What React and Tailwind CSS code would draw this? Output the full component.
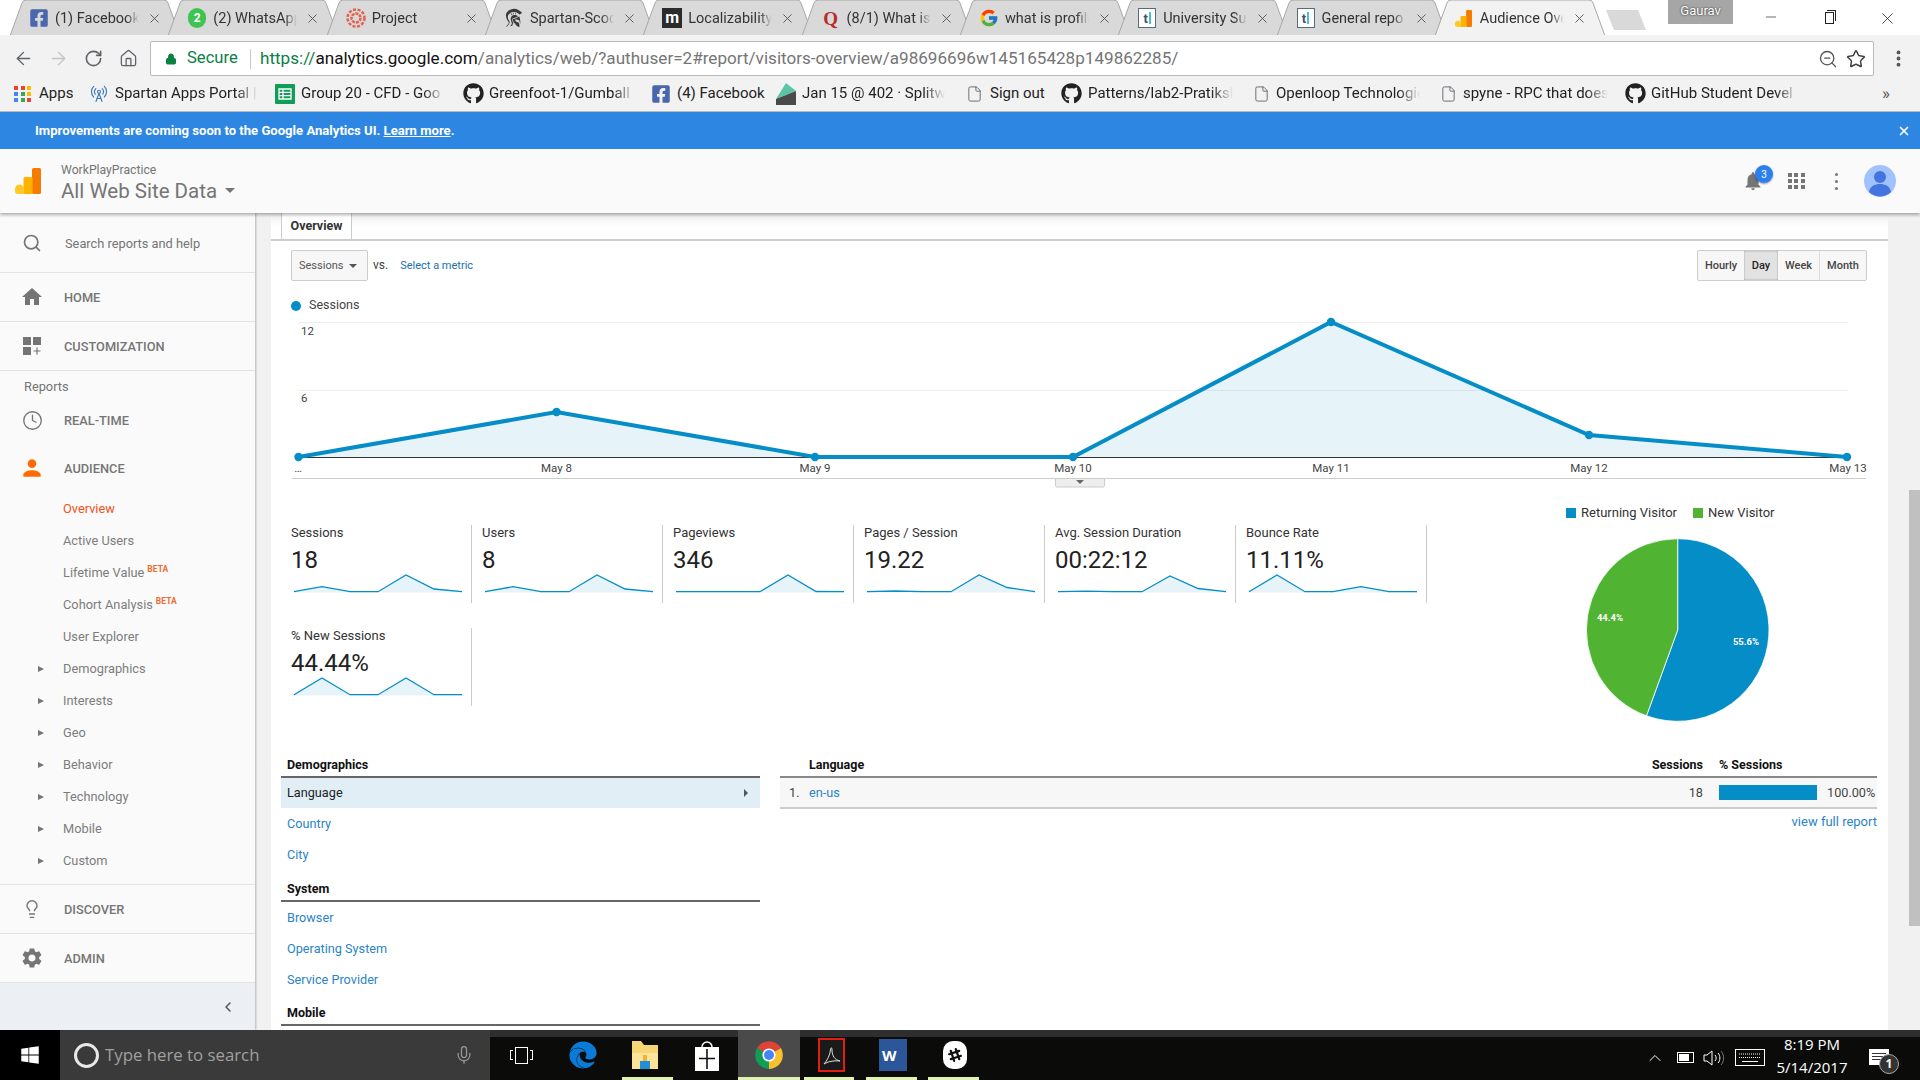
import React from 'react';
import { ArrowLeft, ArrowRight, RotateCw, Home, Star, ZoomOut, Lock, File, MoreVertical, Search, Clock, Lightbulb, ChevronLeft, ChevronUp, Mic, X, Minus, RadioTower } from 'lucide-react';
import { FaFacebookSquare, FaGithub, FaWindows, FaEdge, FaSlackHash } from 'react-icons/fa';
import { FcGoogle } from 'react-icons/fc';
import { GiSpartanHelmet } from 'react-icons/gi';
import { MdSettings, MdNotifications, MdHome, MdPerson } from 'react-icons/md';

const fade = 'overflow-hidden whitespace-nowrap [mask-image:linear-gradient(to_right,black_85%,transparent)]';

function AnalyticsLogo({ className }) {
  return (
    <svg viewBox="0 0 26 26" className={className}>
      <rect x="17" y="0" width="9" height="26" rx="1.5" fill="#f57c00" />
      <rect x="8.5" y="9" width="9" height="17" rx="1.5" fill="#ffb300" />
      <path d="M0 21a4.5 4.5 0 0 1 9 0v5H3a3 3 0 0 1-3-3z" fill="#ffca28" />
    </svg>
  );
}

function TlIcon() {
  return (
    <div className="w-[18px] h-[20px] border border-[#5a6b78] flex items-center justify-center gap-[1px] bg-white">
      <span className="text-[13px] leading-none text-[#42535f] font-bold">t</span>
      <span className="w-[2px] h-[12px] bg-[#4fc1c6]" />
    </div>
  );
}

const tabs = [
  { title: '(1) Facebook', icon: <FaFacebookSquare className="w-[20px] h-[20px] text-[#4a67ad]" /> },
  {
    title: '(2) WhatsApp',
    icon: (
      <div className="w-[18px] h-[20px] rounded-full bg-[#3fc351] flex items-center justify-center text-white text-[12px] font-bold">2</div>
    ),
  },
  {
    title: 'Project',
    icon: (
      <svg viewBox="0 0 20 20" className="w-[20px] h-[20px]">
        <circle cx="10" cy="10" r="4.5" fill="none" stroke="#e4604f" strokeWidth="2.5" strokeDasharray="3 1" />
        <circle cx="10" cy="10" r="8.5" fill="none" stroke="#e4604f" strokeWidth="2.5" strokeDasharray="3 1.6" />
      </svg>
    ),
  },
  { title: 'Spartan-Scoop', icon: <GiSpartanHelmet className="w-[20px] h-[20px] text-[#3a3a3a]" /> },
  {
    title: 'Localizability',
    icon: (
      <div className="w-[20px] h-[20px] bg-[#2b2b2b] flex items-center justify-center text-white text-[16px] leading-none font-bold">m</div>
    ),
  },
  {
    title: '(8/1) What is',
    icon: <span className="text-[#b92b27] text-[19px] leading-none font-bold font-['Liberation_Serif',serif]">Q</span>,
  },
  { title: 'what is profile', icon: <FcGoogle className="w-[20px] h-[20px]" /> },
  { title: 'University Sup', icon: <TlIcon /> },
  { title: 'General repo', icon: <TlIcon /> },
  { title: 'Audience Ove', icon: <AnalyticsLogo className="w-[17px] h-[17px]" />, active: true },
];

function Tab({ title, icon, active }) {
  return (
    <div className={`relative w-[170px] h-[36px] shrink-0 -mr-[11.7px] flex items-center ${active ? 'z-10' : ''}`}>
      <svg viewBox="0 0 170 36" className="absolute inset-0 w-[170px] h-[36px]">
        <path
          d="M0 36 L12 3 Q13 0 16 0 L154 0 Q157 0 158 3 L170 36 Z"
          fill={active ? '#f2f2f2' : '#d9d9d9'}
          stroke="#a8a8a8"
          strokeWidth="1"
        />
      </svg>
      <div className="relative w-[20px] ml-[19px] flex justify-center">{icon}</div>
      <div className={`relative ml-[6px] w-[84px] pt-[2px] text-[14.5px] text-[#333] ${active ? 'text-[#111]' : ''} ${fade}`}>{title}</div>
      <X className="relative ml-[8px] w-[15px] h-[15px] text-[#555]" strokeWidth={1.5} />
    </div>
  );
}

function DocIcon() {
  return <File className="w-[17px] h-[20px] text-[#5f6368]" strokeWidth={1.3} />;
}

const gh = <FaGithub className="w-[21px] h-[21px] text-[#222]" />;

const bookmarks = [
  {
    w: 72,
    pl: 14,
    title: 'Apps',
    gap: 7,
    plain: true,
    icon: (
      <div className="grid grid-cols-3 gap-[2px] w-[18px]">
        {['#ea4335', '#ea4335', '#fbbc05', '#4285f4', '#34a853', '#fbbc05', '#4285f4', '#34a853', '#ea4335'].map((c, i) => (
          <span key={i} className="w-[4px] h-[4px]" style={{ background: c }} />
        ))}
      </div>
    ),
  },
  { w: 186, pl: 18, title: 'Spartan Apps Portal | S', gap: 7, icon: <RadioTower className="w-[18px] h-[20px] text-[#3d78b8]" strokeWidth={1.5} /> },
  {
    w: 187,
    pl: 17,
    title: 'Group 20 - CFD - Goo',
    gap: 6,
    icon: (
      <svg viewBox="0 0 20 20" className="w-[20px] h-[20px]">
        <rect width="20" height="20" rx="1" fill="#0f9d58" />
        <path d="M4 5h12v10H4zM4 8.3h12M4 11.6h12M8 5v10" fill="none" stroke="#fff" strokeWidth="1.3" />
      </svg>
    ),
  },
  { w: 190, pl: 18, title: 'Greenfoot-1/Gumball', gap: 5, icon: gh },
  { w: 126, pl: 16, title: '(4) Facebook', gap: 6, plain: true, icon: <FaFacebookSquare className="w-[20px] h-[20px] text-[#4a67ad]" /> },
  {
    w: 184,
    pl: 15,
    title: 'Jan 15 @ 402 · Splitwi',
    gap: 6,
    icon: (
      <svg viewBox="0 0 20 22" className="w-[20px] h-[22px]">
        <path d="M10 0L20 8 0 16z" fill="#5bc5a7" />
        <path d="M0 16l20-8v14H0z" fill="#4a4a4a" />
      </svg>
    ),
  },
  { w: 100, pl: 21, title: 'Sign out', gap: 7, plain: true, icon: <DocIcon /> },
  { w: 188, pl: 16, title: 'Patterns/lab2-Pratiksh', gap: 6, icon: gh },
  { w: 187, pl: 20, title: 'Openloop Technologie', gap: 6, icon: <DocIcon /> },
  { w: 188, pl: 20, title: 'spyne - RPC that does', gap: 6, icon: <DocIcon /> },
  { w: 190, pl: 17, title: 'GitHub Student Devel', gap: 5, icon: gh },
];

function Chrome() {
  return (
    <div>
      <div className="h-[35px] flex bg-white pl-[10px]">
        {tabs.map((t) => (
          <Tab key={t.title} {...t} />
        ))}
        <div className="relative z-0 ml-[13px] mt-[9px] w-[40px] h-[21px]">
          <svg viewBox="0 0 40 21" className="w-[40px] h-[21px]">
            <path d="M0 1h32l8 20H8z" fill="#d9d9d9" />
          </svg>
        </div>
        <div className="ml-[22px] w-[65px] h-[24px] bg-[#a6a6a6] text-white text-[13px] text-center leading-[22px] [text-shadow:0_0_2px_#111]">Gaurav</div>
        <div className="ml-[9px] flex h-[35px] items-start pt-[9px] text-[#222]">
          <div className="w-[58px] flex justify-center"><Minus className="w-[16px] h-[16px]" strokeWidth={1} /></div>
          <div className="w-[58px] flex justify-center">
            <div className="relative w-[9px] h-[12px] border border-[#222] bg-white mt-[3px]">
              <div className="absolute -top-[3px] left-[1px] w-[9px] h-[11px] border-t border-r border-[#222]" />
            </div>
          </div>
          <div className="w-[58px] flex justify-center"><X className="w-[19px] h-[19px]" strokeWidth={1} /></div>
        </div>
      </div>
      <div className="relative z-20 h-[41px] bg-[#f2f2f2] flex pl-[6px] pt-[6px]">
        <div className="w-[35px] h-[34px] flex items-center justify-center"><ArrowLeft className="w-[21px] h-[21px] text-[#5f6368]" strokeWidth={1.6} /></div>
        <div className="w-[35px] h-[34px] flex items-center justify-center"><ArrowRight className="w-[21px] h-[21px] text-[#c4c4c4]" strokeWidth={1.6} /></div>
        <div className="w-[35px] h-[34px] flex items-center justify-center"><RotateCw className="w-[19px] h-[19px] text-[#5f6368]" strokeWidth={2} /></div>
        <div className="w-[35px] h-[34px] flex items-center justify-center"><Home className="w-[19px] h-[19px] text-[#5f6368]" strokeWidth={1.6} /></div>
        <div className="ml-[4px] w-[1724px] h-[35px] bg-white border border-[#b9b9b9] rounded-[2px] flex items-center pl-[14px]">
          <Lock className="w-[12px] h-[14px] text-[#0b8043] fill-[#0b8043]" strokeWidth={2} />
          <span className="ml-[10px] w-[63px] text-[#0b8043] text-[16.6px]">Secure</span>
          <span className="w-px h-[20px] bg-[#c8c8c8]" />
          <span className="ml-[9px] text-[17.1px] whitespace-nowrap text-[#757575]">
            <span className="text-[#0b8043]">https://</span>
            <span className="text-[#111]">analytics.google.com</span>
            /analytics/web/?authuser=2#report/visitors-overview/a98696696w145165428p149862285/
          </span>
          <div className="ml-auto flex items-center gap-[8px] pr-[7px]">
            <ZoomOut className="w-[20px] h-[20px] text-[#555]" strokeWidth={1.6} />
            <Star className="w-[20px] h-[20px] text-[#444]" strokeWidth={1.8} />
          </div>
        </div>
        <div className="ml-[14px] h-[34px] flex items-center"><MoreVertical className="w-[21px] h-[21px] text-[#555]" strokeWidth={2.4} /></div>
      </div>
      <div className="h-[36px] bg-[#f2f2f2] border-b border-[#b9b9b9] flex items-center text-[15px] text-[#222]">
        {bookmarks.map((b) => (
          <div key={b.title} className="flex items-center shrink-0" style={{ width: b.w, paddingLeft: b.pl }}>
            {b.icon}
            <span className={`flex-1 min-w-0 ${b.plain ? 'whitespace-nowrap' : fade}`} style={{ marginLeft: b.gap }}>{b.title}</span>
          </div>
        ))}
        <span className="ml-auto pr-[30px] text-[17px] text-[#555]">»</span>
      </div>
    </div>
  );
}

function Banner() {
  return (
    <div className="h-[37px] bg-[#2d86e2] flex items-center pl-[35px] pr-[9px] text-white text-[13.1px] font-bold">
      <span>Improvements are coming soon to the Google Analytics UI. <span className="underline">Learn more</span>.</span>
      <X className="ml-auto w-[14px] h-[14px]" strokeWidth={3} />
    </div>
  );
}

function AppHeader() {
  return (
    <div className="relative z-10 h-[64px] bg-[#fafafa] flex items-center shadow-[0_2px_3px_rgba(0,0,0,0.3)]">
      <AnalyticsLogo className="ml-[15px] w-[26px] h-[26px]" />
      <div className="ml-[20px] pt-[4px] text-[#757575]">
        <div className="text-[12.2px] leading-[15px]">WorkPlayPractice</div>
        <div className="text-[20.5px] leading-[26px] flex items-center">
          All Web Site Data
          <span className="ml-[8px] w-0 h-0 border-x-[5px] border-x-transparent border-t-[5px] border-t-[#757575]" />
        </div>
      </div>
      <div className="ml-auto relative flex items-center text-[#757575]">
        <div className="relative w-[24px] flex justify-center">
          <MdNotifications className="w-[22px] h-[22px]" />
          <span className="absolute -top-[5px] left-[14px] w-[18px] h-[18px] rounded-full bg-[#2d7ff0] text-white text-[10px] flex items-center justify-center shadow-[0_1px_2px_rgba(0,0,0,0.4)]">3</span>
        </div>
        <div className="ml-[23px] grid grid-cols-3 gap-[2px] w-[17px]">
          {Array.from({ length: 9 }).map((_, i) => (
            <span key={i} className="w-[4px] h-[4px] bg-[#757575]" />
          ))}
        </div>
        <div className="ml-[30px] flex flex-col gap-[4px]">
          <span className="w-[3px] h-[3px] rounded-full bg-[#757575]" />
          <span className="w-[3px] h-[3px] rounded-full bg-[#757575]" />
          <span className="w-[3px] h-[3px] rounded-full bg-[#757575]" />
        </div>
        <svg viewBox="0 0 32 32" className="ml-[26px] mr-[24px] w-[32px] h-[32px]">
          <circle cx="16" cy="16" r="16" fill="#a0c3ff" />
          <circle cx="16" cy="12" r="6" fill="#4374e0" />
          <path d="M5 27c1-6 6-8 11-8s10 2 11 8a16 16 0 0 1-22 0z" fill="#4374e0" />
        </svg>
      </div>
    </div>
  );
}

function CustomizationIcon() {
  return (
    <svg viewBox="0 0 18 18" className="w-[18px] h-[18px]" fill="#757575">
      <rect width="8" height="8" />
      <rect x="10" width="8" height="8" />
      <rect y="10" width="8" height="8" />
      <path d="M13.4 10.5h1.2v2.9h2.9v1.2h-2.9v2.9h-1.2v-2.9h-2.9v-1.2h2.9z" />
    </svg>
  );
}

function NavRow({ icon, label, h = 'h-[48px]', border }) {
  return (
    <div className={`${h} flex items-center ${border ? 'border-b border-[#e3e3e3]' : ''}`}>
      <div className="w-[64px] flex justify-center">{icon}</div>
      <span className="pt-[2px] text-[12.8px] font-medium text-[#757575]">{label}</span>
    </div>
  );
}

function SubItem({ children, active, beta, arrow }) {
  return (
    <div className={`h-[32px] pt-[2px] flex items-center pl-[63px] text-[12.8px] relative ${active ? 'text-[#f4511e]' : 'text-[#7d7d7d]'}`}>
      {arrow && <span className="absolute left-[38px] w-0 h-0 border-y-[3.5px] border-y-transparent border-l-[6px] border-l-[#757575]" />}
      {children}
      {beta && <span className="ml-[3px] -mt-[7px] text-[8.5px] font-bold text-[#ef6c2e]">BETA</span>}
    </div>
  );
}

function Sidebar() {
  return (
    <div className="w-[255px] shrink-0 h-full bg-[#fafafa] flex flex-col shadow-[1px_0_2px_rgba(0,0,0,0.25)]">
      <div className="h-[60px] border-b border-[#e3e3e3] flex items-center">
        <div className="w-[65px] flex justify-center pr-[2px]"><Search className="w-[20px] h-[20px] text-[#757575]" strokeWidth={2} /></div>
        <span className="pt-[2px] text-[12.8px] text-[#757575]">Search reports and help</span>
      </div>
      <NavRow border h="h-[49px]" icon={<MdHome className="w-[24px] h-[24px] text-[#757575]" />} label="HOME" />
      <NavRow border h="h-[49px]" icon={<CustomizationIcon />} label="CUSTOMIZATION" />
      <div className="h-[25px] pt-[6px] pl-[24px] text-[12.8px] leading-[20px] text-[#757575]">Reports</div>
      <NavRow icon={<Clock className="w-[21px] h-[21px] text-[#757575]" strokeWidth={1.5} />} label="REAL-TIME" />
      <NavRow icon={<MdPerson className="w-[26px] h-[26px] text-[#ff6d00]" />} label="AUDIENCE" />
      <SubItem active>Overview</SubItem>
      <SubItem>Active Users</SubItem>
      <SubItem beta>Lifetime Value</SubItem>
      <SubItem beta>Cohort Analysis</SubItem>
      <SubItem>User Explorer</SubItem>
      {['Demographics', 'Interests', 'Geo', 'Behavior', 'Technology', 'Mobile', 'Custom'].map((s) => (
        <SubItem key={s} arrow>{s}</SubItem>
      ))}
      <div className="h-[9px] shrink-0 border-b border-[#e3e3e3]" />
      <NavRow border h="h-[49px]" icon={<Lightbulb className="w-[20px] h-[20px] text-[#757575]" strokeWidth={1.7} />} label="DISCOVER" />
      <NavRow border h="h-[49px]" icon={<MdSettings className="w-[24px] h-[24px] text-[#757575]" />} label="ADMIN" />
      <div className="flex-1 bg-[#eceff3] flex items-center justify-end pr-[19px]">
        <ChevronLeft className="w-[16px] h-[16px] text-[#555]" strokeWidth={2.2} />
      </div>
    </div>
  );
}

const chartPts = [[298.5, 457], [556.5, 412], [815, 457], [1073, 457], [1331, 322], [1589, 435], [1847, 457]];
const chartLine = chartPts.map((p) => p.join(',')).join(' ');
const xLabels = [['…', 298], ['May 8', 556.5], ['May 9', 815], ['May 10', 1073], ['May 11', 1331], ['May 12', 1589], ['May 13', 1848]];

function MainChart() {
  return (
    <svg viewBox="281 314 1607 176" className="block w-[1607px] h-[176px] ml-[10px]">
      <line x1="298" x2="1848" y1="322.5" y2="322.5" stroke="#eee" />
      <line x1="298" x2="1848" y1="390.5" y2="390.5" stroke="#eee" />
      <polygon points={`298.5,457 ${chartLine} 1847,457`} fill="#058dc7" fillOpacity="0.1" />
      <line x1="298" x2="1848" y1="457.5" y2="457.5" stroke="#333" />
      <polyline points={chartLine} fill="none" stroke="#058dc7" strokeWidth="4" />
      {chartPts.map((p) => (
        <circle key={p[0]} cx={p[0]} cy={p[1]} r="4.2" fill="#058dc7" />
      ))}
      <text x="301" y="335" fontSize="11.5" fill="#444">12</text>
      <text x="301" y="402" fontSize="11.5" fill="#444">6</text>
      {xLabels.map(([t, x]) => (
        <text key={t} x={x} y="472" fontSize="11.5" fill="#444" textAnchor="middle">{t}</text>
      ))}
      <line x1="292" x2="1866" y1="478.5" y2="478.5" stroke="#ccc" />
      <path d="M1055.5 478.5h49v7a1.5 1.5 0 0 1-1.5 1.5h-46a1.5 1.5 0 0 1-1.5-1.5z" fill="#eee" stroke="#ccc" />
      <path d="M1076 480h8l-4 4z" fill="#666" />
    </svg>
  );
}

function Sparkline({ ys }) {
  const pts = ys.map((y, i) => `${1 + i * 28},${y}`).join(' ');
  return (
    <svg viewBox="0 0 170 20" className="block w-[170px] h-[20px] ml-[2px]">
      <polygon points={`1,18.5 ${pts} 169,18.5`} fill="#058dc7" fillOpacity="0.1" />
      <polyline points={pts} fill="none" stroke="#058dc7" strokeWidth="1.3" />
    </svg>
  );
}

const metrics = [
  { label: 'Sessions', value: '18', ys: [17.7, 12.7, 17.7, 17.7, 1, 15, 17.7] },
  { label: 'Users', value: '8', ys: [17.7, 12.7, 17.7, 17.7, 1, 15, 17.7] },
  { label: 'Pageviews', value: '346', ys: [17.7, 17.7, 17.7, 17.7, 1, 17.5, 17.7] },
  { label: 'Pages / Session', value: '19.22', ys: [17.7, 17, 17.7, 17.7, 1, 13.5, 17.7] },
  { label: 'Avg. Session Duration', value: '00:22:12', ys: [17.7, 17.2, 17.7, 17.7, 2, 14.5, 17.7] },
  { label: 'Bounce Rate', value: '11.11%', ys: [17.7, 1, 17.7, 17.7, 12.7, 17.7, 17.7] },
  { label: '% New Sessions', value: '44.44%', ys: [17.7, 1, 17.7, 17.7, 1, 17.7, 17.7] },
];

function Scorecards() {
  return (
    <div className="grid grid-cols-[repeat(6,191px)] content-start gap-y-[25px] pt-[35px] w-[1146px]">
      {metrics.map((m) => (
        <div key={m.label} className="h-[78px] pl-[10px] border-r border-[#ccc]">
          <div className="text-[13px] leading-[16px] text-[#333]">{m.label}</div>
          <div className="mt-[4px] text-[24px] leading-[30px] text-[#222]">{m.value}</div>
          <div className="-mt-[1px]"><Sparkline ys={m.ys} /></div>
        </div>
      ))}
    </div>
  );
}

function VisitorPie() {
  return (
    <div className="ml-[139px] pt-[16px]">
      <div className="flex items-center text-[13px] leading-[14px] text-[#333]">
        <span className="w-[10px] h-[10px] bg-[#058dc7]" />
        <span className="ml-[5px]">Returning Visitor</span>
        <span className="ml-[16px] w-[10px] h-[10px] bg-[#50b432]" />
        <span className="ml-[5px]">New Visitor</span>
      </div>
      <svg viewBox="1566 530 220 204" className="block mt-[10px] w-[220px] h-[204px]">
        <path d="M1677.7 630 L1677.7 538.7 A91.3 91.3 0 1 1 1646.5 715.8 Z" fill="#058dc7" stroke="#fff" strokeWidth="0.8" />
        <path d="M1677.7 630 L1646.5 715.8 A91.3 91.3 0 0 1 1677.7 538.7 Z" fill="#50b432" stroke="#fff" strokeWidth="0.8" />
        <text x="1610" y="621" fontSize="9.5" fontWeight="700" fill="#fff" textAnchor="middle">44.4%</text>
        <text x="1746" y="645" fontSize="9.5" fontWeight="700" fill="#fff" textAnchor="middle">55.6%</text>
      </svg>
    </div>
  );
}

function GroupHead({ children, mt = '' }) {
  return <div className={`${mt} h-[19px] pl-[6px] text-[12.5px] leading-[16px] font-bold text-[#111] border-b-2 border-[#666] box-content`}>{children}</div>;
}

function LinkRow({ children }) {
  return <div className="h-[31px] pl-[6px] flex items-center text-[12.7px] text-[#2a84c6]">{children}</div>;
}

function Demographics() {
  return (
    <div className="flex gap-[20px] ml-[10px]">
      <div className="w-[479px] shrink-0">
        <GroupHead>Demographics</GroupHead>
        <div className="h-[30px] pl-[6px] pr-[12px] flex items-center justify-between text-[12.7px] text-[#222] bg-[#e1eef6]">
          Language
          <span className="w-0 h-0 border-y-[4px] border-y-transparent border-l-[4px] border-l-[#555]" />
        </div>
        <LinkRow>Country</LinkRow>
        <LinkRow>City</LinkRow>
        <GroupHead mt="mt-[11px]">System</GroupHead>
        <LinkRow>Browser</LinkRow>
        <LinkRow>Operating System</LinkRow>
        <LinkRow>Service Provider</LinkRow>
        <GroupHead mt="mt-[10px]">Mobile</GroupHead>
      </div>
      <div className="w-[1097px]">
        <div className="h-[19px] flex items-start text-[12.5px] leading-[16px] font-bold text-[#111] border-b-2 border-[#888] box-content">
          <span className="ml-[29px]">Language</span>
          <span className="ml-auto">Sessions</span>
          <span className="ml-[16px] w-[158px]">% Sessions</span>
        </div>
        <div className="h-[29px] bg-[#f7f7f7] border-b-2 border-[#ccc] box-content flex items-center text-[12.7px] text-[#444]">
          <span className="ml-[9px] w-[20px]">1.</span>
          <span className="text-[#2a84c6]">en-us</span>
          <span className="ml-auto">18</span>
          <span className="ml-[16px] w-[98px] h-[15px] bg-[#058dc7]" />
          <span className="ml-[10px] w-[50px]">100.00%</span>
        </div>
        <div className="mt-[5px] text-right text-[13px] leading-[16px] text-[#2a84c6]">view full report</div>
      </div>
    </div>
  );
}

function MainContent() {
  return (
    <div className="flex-1 h-full bg-white overflow-hidden relative">
      <div className="absolute inset-x-0 top-0 h-[14px] bg-gradient-to-b from-[#eeeeee] to-transparent" />
      <div className="relative h-[26px] border-b-2 border-[#ccc] box-content pl-[10px]">
        <div className="w-[71px] h-[26px] bg-white border-x border-[#ccc] flex items-center justify-center text-[12.5px] font-bold text-[#333]">Overview</div>
      </div>
      <div className="mt-[9px] pl-[20px] pr-[21px] h-[31px] flex items-start">
        <div className="w-[77px] h-[31px] pt-[1px] border border-[#ccc] rounded-[2px] bg-[#f7f7f7] flex items-center pl-[7px] text-[11px] text-[#555]">
          Sessions
          <span className="ml-[6px] w-0 h-0 border-x-[4px] border-x-transparent border-t-[4px] border-t-[#555]" />
        </div>
        <span className="ml-[5px] mt-[6px] text-[12px] text-[#444]">vs.</span>
        <span className="ml-[12px] mt-[8px] text-[11px] text-[#1a6fb0]">Select a metric</span>
        <div className="ml-auto flex h-[31px] pt-0 border border-[#ccc] rounded-[2px] bg-[#f7f7f7] text-[11px] font-medium text-[#444]">
          <span className="w-[46px] pt-[1px] flex items-center justify-center">Hourly</span>
          <span className="w-[34px] pt-[1px] flex items-center justify-center bg-[#e2e2e2] shadow-[inset_0_0_2px_rgba(0,0,0,0.35)] text-[#222]">Day</span>
          <span className="w-[42px] pt-[1px] flex items-center justify-center border-r border-[#ddd]">Week</span>
          <span className="w-[46px] pt-[1px] flex items-center justify-center">Month</span>
        </div>
      </div>
      <div className="mt-[16px] h-[17px] pl-[20px] flex items-center text-[12.5px] text-[#444]">
        <span className="w-[10px] h-[10px] rounded-full bg-[#058dc7]" />
        <span className="ml-[8px]">Sessions</span>
      </div>
      <MainChart />
      <div className="flex h-[267px] ml-[10px]">
        <Scorecards />
        <VisitorPie />
      </div>
      <Demographics />
    </div>
  );
}

function ChromeLogo() {
  return (
    <svg viewBox="0 0 28 28" className="w-[28px] h-[28px]">
      <path d="M14 14L2 7.1A14 14 0 0 1 26 7z" fill="#db4437" />
      <path d="M14 14L26 7A14 14 0 0 1 14 28z" fill="#fbc02d" />
      <path d="M14 14V28A14 14 0 0 1 2 7.1z" fill="#0f9d58" />
      <circle cx="14" cy="14" r="6.6" fill="#fff" />
      <circle cx="14" cy="14" r="5" fill="#4285f4" />
    </svg>
  );
}

function Taskbar() {
  const bar = 'absolute bottom-0 h-[3px] bg-[#e0f4b0]';
  return (
    <div className="h-[50px] shrink-0 flex bg-[linear-gradient(#2e2e2e_7px,#0b0c0a_7px)] font-['Open_Sans',sans-serif]">
      <div className="w-[60px] bg-black flex items-center justify-center"><FaWindows className="w-[20px] h-[20px] text-white" /></div>
      <div className="w-[430px] bg-[#3a3a3a] flex items-center pl-[14px]">
        <span className="w-[25px] h-[25px] rounded-full border-[3px] border-[#e8e8e8]" />
        <span className="ml-[6px] text-[#a0a0a0] text-[16.8px]">Type here to search</span>
        <Mic className="ml-auto mr-[16px] w-[20px] h-[22px] text-[#999]" strokeWidth={1.5} />
      </div>
      <div className="w-[62px] relative flex items-center justify-center">
        <div className="relative w-[13px] h-[17px] border-[1.5px] border-white">
          <div className="absolute -left-[6px] top-[2px] w-[3px] h-[10px] border-y border-l border-white" />
          <div className="absolute -right-[6px] top-[2px] w-[3px] h-[10px] border-y border-r border-white" />
        </div>
      </div>
      <div className="w-[62px] flex items-center justify-center"><FaEdge className="w-[28px] h-[28px] text-[#0a7bd7]" /></div>
      <div className="w-[62px] relative flex items-center justify-center">
        <svg viewBox="0 0 26 28" className="w-[26px] h-[28px]">
          <path d="M0 0h9l3 4h14v24H0z" fill="#f7d774" />
          <path d="M0 12h26v16H0z" fill="#fbe39a" />
          <path d="M8 20h10v8H8z" fill="#1f8fd8" />
          <path d="M11 14h4v6h-4z" fill="#f2b233" />
        </svg>
        <span className={`${bar} left-[8px] w-[51px]`} />
      </div>
      <div className="w-[62px] flex items-center justify-center">
        <svg viewBox="0 0 26 32" className="w-[26px] h-[32px]">
          <path d="M8 8a5 5 0 0 1 10 0" fill="none" stroke="#fff" strokeWidth="1.5" />
          <path d="M1 8h24v24H1z" fill="#fff" />
          <path d="M13 10v20M5 19.500h16" stroke="#111" strokeWidth="1.6" />
        </svg>
      </div>
      <div className="w-[62px] relative bg-[#4a4a4a] flex items-center justify-center">
        <ChromeLogo />
        <span className={`${bar} left-0 w-[62px]`} />
      </div>
      <div className="w-[62px] relative flex items-center justify-center">
        <svg viewBox="0 0 27 34" className="w-[27px] h-[34px]">
          <rect x="1" y="1" width="25" height="32" fill="#1a1a1a" stroke="#e01e12" strokeWidth="2" />
          <path d="M6 26c3-3 6-9 6.500-14 .2-3 1.500-3 1.500 0 0 6 3 10 8 11-5-.5-11 0-16 3z" fill="none" stroke="#ddd" strokeWidth="1" />
        </svg>
        <span className={`${bar} left-[4px] w-[50px]`} />
      </div>
      <div className="w-[62px] relative flex items-center justify-center">
        <div className="w-[28px] h-[32px] bg-[#2b579a] flex items-center pl-[3px] text-white text-[15px] font-bold">
          W
        </div>
        <span className={`${bar} left-[4px] w-[51px]`} />
      </div>
      <div className="w-[62px] relative flex items-center justify-center">
        <div className="w-[24px] h-[28px] rounded-[10px] bg-white flex items-center justify-center"><FaSlackHash className="w-[16px] h-[16px] text-[#111]" /></div>
        <span className={`${bar} left-[4px] w-[51px]`} />
      </div>
      <div className="ml-auto flex h-[50px] text-white">
        <div className="w-[30px] flex items-center justify-center pt-[5px]"><ChevronUp className="w-[20px] h-[20px]" strokeWidth={1.2} /></div>
        <div className="w-[30px] flex items-center justify-center pt-[5px]">
          <div className="w-[17px] h-[11px] border border-white p-[1px]"><div className="w-[10px] h-full bg-white" /></div>
        </div>
        <div className="w-[28px] flex items-center justify-center pt-[5px]">
          <svg viewBox="0 0 22 16" className="w-[22px] h-[16px]" fill="none" stroke="#fff" strokeWidth="1">
            <path d="M1 5h3l5-4v14l-5-4H1zM12 5c1.5 1.5 1.5 4.500 0 6M15 3c2.500 2.500 2.500 7.500 0 10" />
            <path d="M18 1c3.500 4 3.500 10 0 14" stroke="#777" />
          </svg>
        </div>
        <div className="w-[44px] flex items-center justify-center pt-[5px]">
          <svg viewBox="0 0 30 17" className="w-[30px] h-[17px]" fill="none" stroke="#fff">
            <rect x="0.500" y="0.500" width="29" height="16" />
            <path d="M4 5h22M4 8.500h22" strokeDasharray="1 1" />
            <path d="M7 12.500h16" />
          </svg>
        </div>
        <div className="w-[80px] flex flex-col items-center text-[15px] leading-[23px] pt-[3px]">
          <span>8:19 PM</span>
          <span>5/14/2017</span>
        </div>
        <div className="w-[68px] relative flex items-center pl-[17px] pt-[3px]">
          <div className="w-[20px] h-[16px] bg-white flex flex-col justify-center gap-[2px] px-[3px]">
            <span className="h-px bg-[#333]" />
            <span className="h-px bg-[#333]" />
            <span className="h-px bg-[#333]" />
          </div>
          <span className="absolute left-[27px] top-[24px] w-[20px] h-[20px] rounded-full bg-[#333] border border-[#aaa] flex items-center justify-center text-[12px] font-bold">1</span>
        </div>
      </div>
    </div>
  );
}

export default function App() {
  return (
    <div className="w-[1920px] h-[1080px] overflow-hidden flex flex-col font-['Roboto',sans-serif] bg-white">
      <Chrome />
      <Banner />
      <AppHeader />
      <div className="flex-1 min-h-0 flex bg-[#f1f1f1]">
        <Sidebar />
        <div className="w-[16px] shrink-0" />
        <MainContent />
        <div className="w-[32px] shrink-0 h-full pl-[21px] pt-[277px]">
          <div className="w-[11px] h-[436px] bg-[#c0c0c0]" />
        </div>
      </div>
      <Taskbar />
    </div>
  );
}
